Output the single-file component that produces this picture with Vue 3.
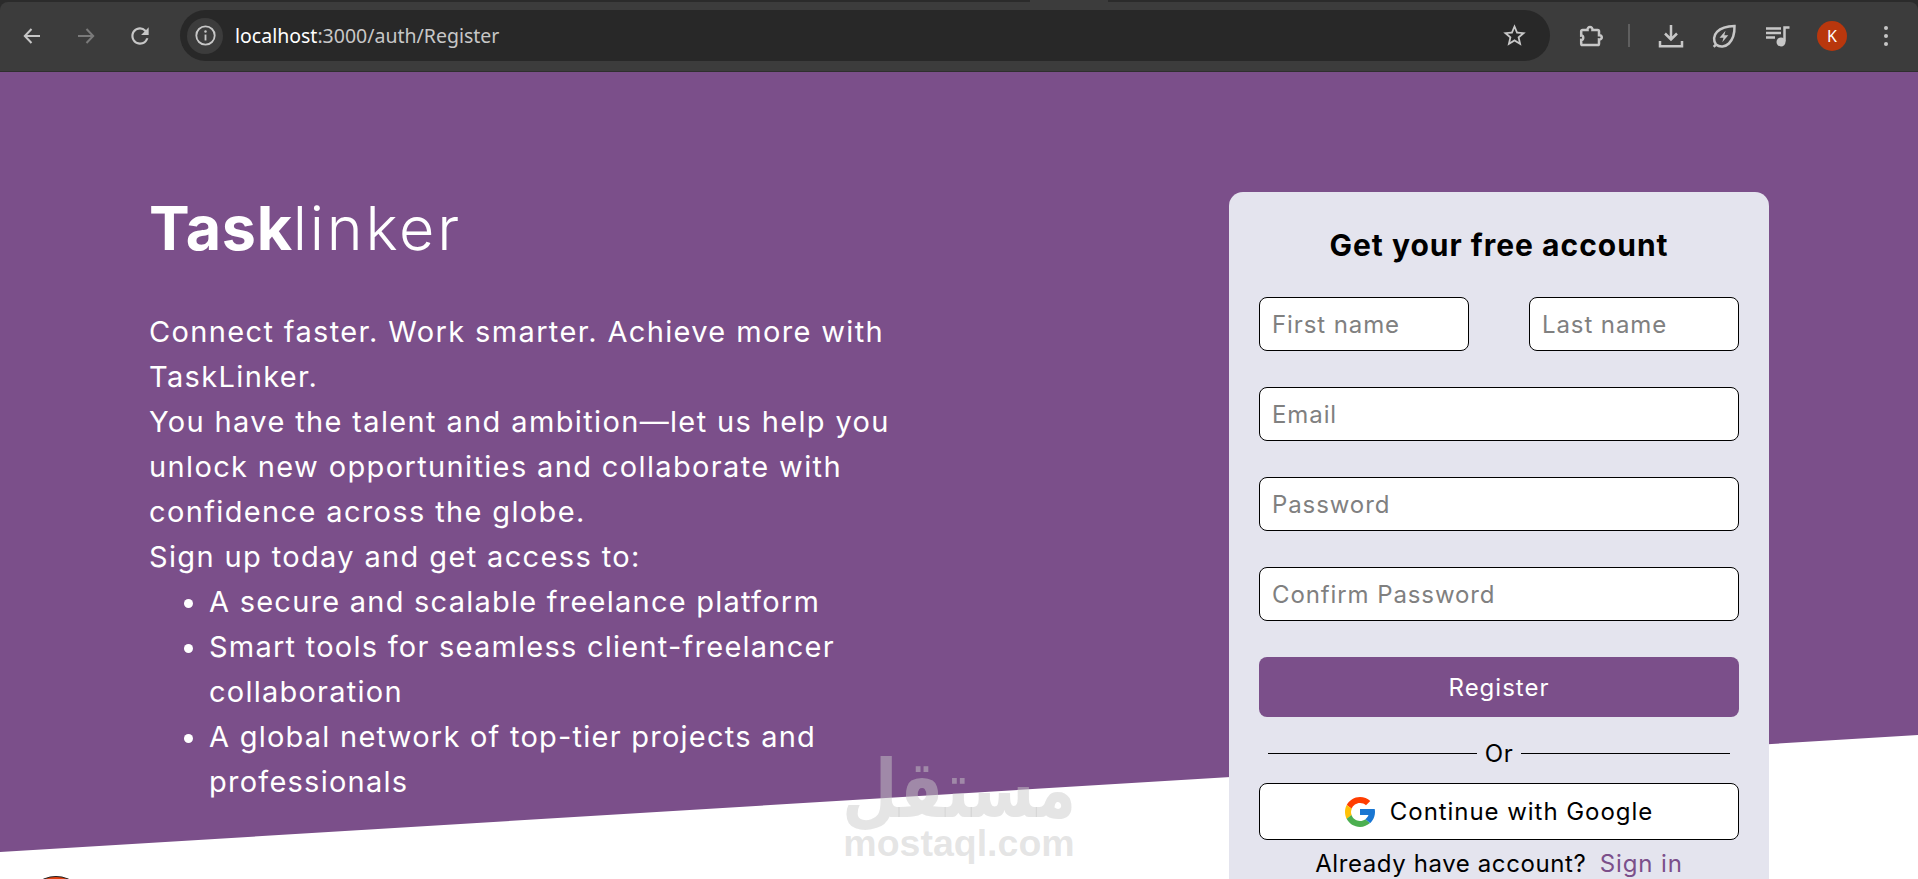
<template>
  <div class="screen">
    <header class="browser">
      <div class="toolbar">
        <button class="nav-btn">
          <svg viewBox="0 0 24 24" width="24" height="24"><path d="M20 12H5M11.5 5 4.8 12l6.7 7" class="stroke" /></svg>
        </button>
        <button class="nav-btn dim">
          <svg viewBox="0 0 24 24" width="24" height="24"><path d="M4 12h15M12.500 5l6.700 7-6.700 7" class="stroke" /></svg>
        </button>
        <button class="nav-btn">
          <svg viewBox="0 0 24 24" width="26" height="26"><path class="fill" d="M17.65 6.35A7.958 7.958 0 0 0 12 4c-4.42 0-7.99 3.58-7.99 8s3.57 8 7.99 8c3.73 0 6.84-2.55 7.73-6h-2.08A5.99 5.99 0 0 1 12 18c-3.31 0-6-2.69-6-6s2.69-6 6-6c1.66 0 3.14.69 4.22 1.78L13 11h7V4l-2.35 2.35z" /></svg>
        </button>

        <div class="omnibox">
          <span class="site-info">
            <svg viewBox="0 0 24 24" width="23" height="23">
              <circle cx="12" cy="12" r="9.6" class="stroke thin" />
              <path d="M12 11v6.2" class="stroke thin" />
              <circle cx="12" cy="7.8" r="1.3" class="fill" />
            </svg>
          </span>
          <span class="url"><span class="host">localhost</span>:3000/auth/Register</span>
          <svg class="star" viewBox="0 0 24 24" width="27" height="27"><path class="fill" d="M22 9.24l-7.19-.62L12 2 9.19 8.63 2 9.24l5.46 4.73L5.82 21 12 17.27 18.18 21l-1.63-7.03L22 9.24zM12 15.4l-3.76 2.27 1-4.28-3.32-2.88 4.38-.38L12 6.1l1.71 4.04 4.38.38-3.32 2.88 1 4.28L12 15.4z" /></svg>
        </div>

        <div class="actions">
          <svg viewBox="0 0 26 26" width="26" height="26"><path class="stroke wide" d="M4.500 7h5c-.4-4 5.400-4 5 0h5.200a1.300 1.300 0 0 1 1.300 1.300v3.900c3.700-.4 3.700 4.700 0 4.300v4.200a1.300 1.300 0 0 1-1.300 1.300H4.500a1.300 1.300 0 0 1-1.300-1.300v-3.700c2.700.3 2.700-4.900 0-4.500V8.300A1.300 1.300 0 0 1 4.500 7z" /></svg>
          <span class="sep"></span>
          <svg viewBox="0 0 26 26" width="26" height="26"><path class="stroke wide" d="M13 2v13M7 10.500l6 6 6-6M2 18v5.200h22V18" /></svg>
          <svg viewBox="0 0 26 26" width="26" height="26">
            <path class="stroke wide" d="M5 21.500C2.200 18 2.400 12.400 6 8.800 9.800 5 16.500 3.200 23.500 3c.2 7-1.800 13.700-5.600 17.500C14.300 24 8.700 24.400 5 21.500zM5 21.500l-2.300 2.300" />
            <path class="fill" d="M14.500 7.800 8.500 14.800h4l-1.200 4.500 6-7h-4z" />
          </svg>
          <svg viewBox="0 0 26 26" width="26" height="26">
            <path class="stroke wide" d="M1 5.500h15M1 10h15M1 14.500h9" />
            <path class="stroke wide" d="M19.500 18.500V4.500h5" />
            <circle cx="16" cy="19" r="4.500" class="fill" />
          </svg>
          <span class="avatar">K</span>
          <span class="dots"><i></i><i></i><i></i></span>
        </div>
      </div>
    </header>

    <main class="page">
      <div class="hero-bg"></div>

      <div class="content">
        <section class="intro">
          <h1 class="brand"><b>Task</b>linker</h1>
          <div class="copy">
            <p>Connect faster. Work smarter. Achieve more with TaskLinker.</p>
            <p>You have the talent and ambition—let us help you unlock new opportunities and collaborate with confidence across the globe.</p>
            <p>Sign up today and get access to:</p>
            <ul>
              <li v-for="item in perks" :key="item">{{ item }}</li>
            </ul>
          </div>
        </section>

        <section class="card">
          <h2>Get your free account</h2>
          <form class="form" @submit.prevent>
            <div class="name-row">
              <input placeholder="First name" />
              <input placeholder="Last name" />
            </div>
            <input type="email" placeholder="Email" />
            <input type="password" placeholder="Password" />
            <input type="password" placeholder="Confirm Password" />
            <button class="register">Register</button>
          </form>
          <div class="or"><span></span>Or<span></span></div>
          <button class="google">
            <svg viewBox="4 4 40 40" width="30" height="30">
              <path fill="#FF3D00" d="M6.300 14.700l6.600 4.800C14.700 15.100 19 12 24 12c3.100 0 5.800 1.200 8 3l5.700-5.700C34 6.100 29.300 4 24 4 16.300 4 9.700 8.300 6.300 14.700z" />
              <path fill="#FFC107" d="M6.300 14.700C4.800 17.500 4 20.600 4 24c0 3.300.8 6.400 2.200 9.200l6.700-5.100c-.6-1.300-.9-2.700-.9-4.100 0-1.600.4-3.100 1-4.500z" />
              <path fill="#4CAF50" d="M24 44c5.200 0 9.900-2 13.400-5.200l-6.200-5.200C29.200 35.100 26.700 36 24 36c-5.200 0-9.600-3.300-11.300-7.900l-6.500 5C9.500 39.600 16.200 44 24 44z" />
              <path fill="#1976D2" d="M43.600 20.100H42V20H24v8h11.300c-.8 2.200-2.200 4.200-4.100 5.600l6.200 5.200C37 39.200 44 34 44 24c0-1.300-.1-2.700-.4-3.900z" />
            </svg>
            Continue with Google
          </button>
          <p class="signin">Already have account? <a>Sign in</a></p>
        </section>
      </div>

      <div class="logo-peek"></div>

      <div class="watermark">
        <span class="wm-ar">مستقل</span>
        <span class="wm-en">mostaql.com</span>
      </div>
    </main>
  </div>
</template>

<script setup>
const perks = [
  'A secure and scalable freelance platform',
  'Smart tools for seamless client-freelancer collaboration',
  'A global network of top-tier projects and professionals'
]
</script>

<style>
html, body { margin: 0; overflow: hidden; background: #fff; }
</style>

<style scoped>
.screen {
  width: 1918px;
  height: 879px;
  display: flex;
  flex-direction: column;
  overflow: hidden;
  font-family: Inter, "Liberation Sans", sans-serif;
}
.browser {
  position: relative;
  height: 72px;
  background: #2b2b2b;
  padding-top: 2px;
  box-sizing: border-box;
  flex: none;
}
/* the bit of the active tab that joins the toolbar */
.browser::before {
  content: "";
  position: absolute;
  left: 1030px;
  top: 0;
  width: 78px;
  height: 2px;
  background: #3c3c3c;
}
.toolbar {
  height: 70px;
  background: #3c3c3c;
  border-radius: 8px 8px 0 0;
  border-bottom: 1px solid #2f2f2f;
  display: flex;
  align-items: center;
  padding: 0 0 2px 10px;
  box-sizing: border-box;
}
.nav-btn {
  width: 44px;
  height: 44px;
  margin-right: 10px;
  padding: 0;
  background: none;
  border: 0;
  display: flex;
  align-items: center;
  justify-content: center;
}
.nav-btn.dim { opacity: 0.45; }
.stroke { fill: none; stroke: #c7c7c7; stroke-width: 2; }
.stroke.thin { stroke-width: 1.9; }
.stroke.wide { stroke-width: 2.5; }
.fill { fill: #c7c7c7; }
.omnibox {
  width: 1370px;
  height: 51px;
  margin-left: 8px;
  border-radius: 26px;
  background: #282828;
  display: flex;
  align-items: center;
  padding: 0 22px 0 7px;
  box-sizing: border-box;
}
.site-info {
  width: 36px;
  height: 36px;
  border-radius: 50%;
  background: #3c3c3c;
  display: flex;
  align-items: center;
  justify-content: center;
  flex: none;
}
.url {
  margin-left: 12px;
  font-family: "Noto Sans", sans-serif;
  font-size: 19.5px;
  color: #c7c7c7;
  flex: 1;
}
.host { color: #fff; }
.actions {
  flex: 1;
  display: flex;
  align-items: center;
  padding-left: 28px;
}
.actions svg { flex: none; }
.sep {
  width: 2px;
  height: 23px;
  background: #5f5f5f;
  margin: 0 28px 0 24px;
}
.actions svg:nth-of-type(3) { margin-left: 27px; }
.actions svg:nth-of-type(4) { margin-left: 28px; }
.avatar {
  width: 30px;
  height: 30px;
  margin-left: 26px;
  border-radius: 50%;
  background: #b9370d;
  color: #fff;
  font-family: "Noto Sans", sans-serif;
  font-size: 16px;
  display: flex;
  align-items: center;
  justify-content: center;
}
.dots {
  margin-left: 37px;
  display: flex;
  flex-direction: column;
  gap: 4px;
}
.dots i {
  width: 4px;
  height: 4px;
  border-radius: 50%;
  background: #c7c7c7;
}
.page {
  position: relative;
  flex: 1;
  overflow: hidden;
  background: #fff;
}
.hero-bg {
  position: absolute;
  inset: 0;
  background: #7b4f8a;
  clip-path: polygon(0 0, 100% 0, 100% 663px, 0 780px);
}
.content {
  position: relative;
  display: flex;
  justify-content: space-between;
  padding: 120px 149px 0;
}
.intro { width: 760px; color: #fff; }
.brand {
  margin: 0;
  font-size: 61px;
  line-height: 72px;
  font-weight: 300;
  letter-spacing: 2.8px;
}
.brand b { font-weight: 700; letter-spacing: 0.6px; }
.copy {
  margin-top: 45px;
  font-size: 29px;
  line-height: 45px;
  letter-spacing: 1.36px;
}
.copy p { margin: 0; }
.copy ul { margin: 0; padding-left: 60px; max-width: 640px; letter-spacing: 1.24px; }
.card {
  width: 540px;
  height: 760px;
  flex: none;
  background: #e4e4ee;
  border-radius: 14px;
  padding: 32px 30px 0;
  box-sizing: border-box;
  text-align: center;
  color: #000;
}
.card h2 {
  margin: 0;
  font-size: 30px;
  line-height: 42px;
  font-weight: 700;
  letter-spacing: 1px;
}
.form {
  margin-top: 31px;
  display: flex;
  flex-direction: column;
  gap: 36px;
}
.name-row {
  display: flex;
  justify-content: space-between;
}
.name-row input { width: 210px; }
input {
  height: 54px;
  box-sizing: border-box;
  border: 1px solid #000;
  border-radius: 8px;
  background: #fff;
  padding: 0 12px;
  font-family: inherit;
  font-size: 24px;
  letter-spacing: 0.9px;
  outline: none;
}
input::placeholder { color: #808080; }
.register {
  height: 60px;
  border: 0;
  border-radius: 8px;
  background: #7b4f8a;
  color: #fff;
  font-family: inherit;
  font-size: 24px;
  letter-spacing: 1px;
}
.or {
  margin: 21px 9px 0;
  height: 30px;
  display: flex;
  align-items: center;
  gap: 8px;
  font-size: 24px;
  letter-spacing: 0.5px;
}
.or span {
  flex: 1;
  height: 1px;
  background: #000;
}
.google {
  width: 100%;
  height: 57px;
  margin-top: 15px;
  border: 1px solid #000;
  border-radius: 8px;
  background: #fff;
  color: #000;
  font-family: inherit;
  font-size: 24px;
  letter-spacing: 0.95px;
  display: flex;
  align-items: center;
  justify-content: center;
  gap: 15px;
}
.signin {
  margin: 9px 0 0;
  font-size: 24px;
  line-height: 30px;
  letter-spacing: 0.6px;
}
.signin a { color: #7b4f8a; margin-left: 6px; letter-spacing: 0.9px; }
.logo-peek {
  position: absolute;
  left: 26px;
  top: 804px;
  width: 60px;
  height: 60px;
  border-radius: 50%;
  background: #e2400f;
  border-top: 1px solid #222;
}
.watermark {
  position: absolute;
  left: 844px;
  top: 683px;
  width: 230px;
  display: flex;
  flex-direction: column;
  align-items: center;
  color: rgba(200, 200, 200, 0.48);
  font-weight: 700;
  pointer-events: none;
}
.wm-ar {
  font-family: "DejaVu Sans", sans-serif;
  font-size: 64px;
  line-height: 68px;
  transform: scaleY(1.25);
}
.wm-en {
  font-family: "Liberation Sans", sans-serif;
  font-size: 37.5px;
  line-height: 40px;
}
</style>
